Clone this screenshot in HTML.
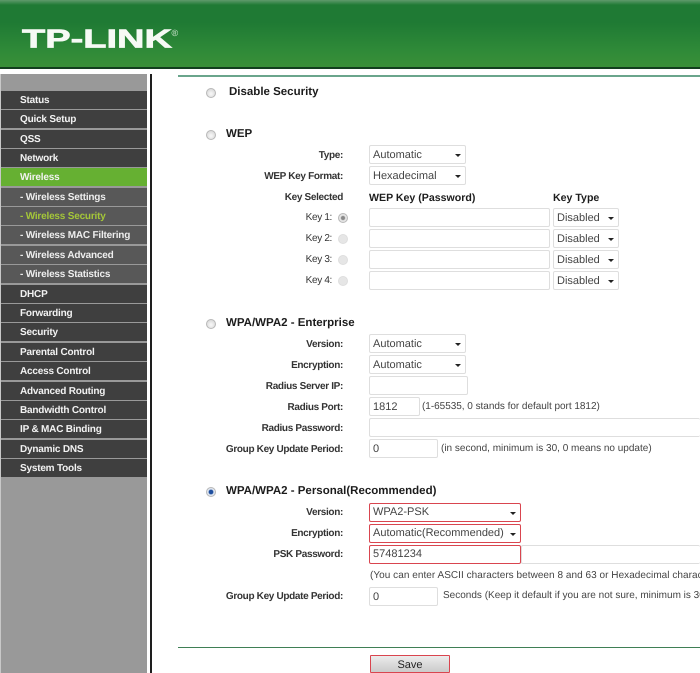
<!DOCTYPE html>
<html><head><meta charset="utf-8">
<style>
html,body{margin:0;padding:0;background:#fff;overflow:hidden}
body{position:relative;width:700px;height:673px;overflow:hidden;font-family:"Liberation Sans",Arial,sans-serif;color:#222;text-rendering:geometricPrecision;filter:blur(.25px)}
div,span{position:absolute;box-sizing:border-box;white-space:nowrap}
.m{left:1px;width:146px;height:18px;background:#3f3f3f;color:#f2f2f2;font-weight:bold;font-size:10px;letter-spacing:-.2px;line-height:20px;padding-left:19px}
.s{background:#585858;color:#eee}
.l{right:357px;font-weight:bold;font-size:10px;letter-spacing:-.33px;line-height:18px;color:#333;text-align:right}
.h{font-weight:bold;font-size:11.5px;line-height:18px;color:#1c1c1c}
.i{background:#fff;border:1px solid #dedede;border-radius:2px;font-size:11px;line-height:18px;padding-left:3px;color:#444;height:19px}
.sel::after{content:"";position:absolute;right:4px;top:8px;border:3px solid transparent;border-top:3.5px solid #222;border-bottom:0}
.r{border-color:#d9454f;border-width:1.5px;line-height:17px}
.t{font-size:10px;line-height:18px;color:#444}
.o{width:10px;height:10px;border-radius:50%;background:radial-gradient(circle at 50% 60%,#f4f4f4 15%,#cfcfcf 100%);border:1px solid #b8b8b8}
.d{width:10px;height:10px;border-radius:50%;background:#e6e6e6;border:1px solid #dedede}
</style></head><body>
<div style="left:0;top:0;width:700px;height:68px;background:linear-gradient(#5f9a6c 0,#1f7a34 5px,#1f7a34 22px,#2f8a38 50px,#3a9038 68px)"></div>
<div style="left:0;top:67px;width:700px;height:2px;background:#123f1e"></div>
<svg style="position:absolute;left:0;top:0" width="200" height="60"><text x="22" y="47.5" font-family="Liberation Sans" font-weight="bold" font-size="26" fill="#f6faf5" stroke="#f6faf5" stroke-width=".7" textLength="150" lengthAdjust="spacingAndGlyphs">TP-LINK</text><text x="171.5" y="36" font-family="Liberation Sans" font-size="9" fill="#d5e8d5">®</text></svg>

<div style="left:0;top:74px;width:1px;height:599px;background:#c8c8c8"></div>
<div style="left:1px;top:74px;width:146px;height:599px;background:#999"></div>
<div style="left:150px;top:74px;width:2px;height:599px;background:#1e1e1e"></div>
<div style="left:178px;top:75px;width:522px;height:2px;background:#6aa58c"></div>
<div style="left:178px;top:647px;width:522px;height:1px;background:#3f7f55"></div>

<div class="m" style="top:91px">Status</div>
<div class="m" style="top:110px">Quick Setup</div>
<div class="m" style="top:130px">QSS</div>
<div class="m" style="top:149px">Network</div>
<div class="m" style="top:168px;background:#66b032">Wireless</div>
<div class="m s" style="top:188px">- Wireless Settings</div>
<div class="m s" style="top:207px;color:#a4c639">- Wireless Security</div>
<div class="m s" style="top:226px">- Wireless MAC Filtering</div>
<div class="m s" style="top:246px">- Wireless Advanced</div>
<div class="m s" style="top:265px">- Wireless Statistics</div>
<div class="m" style="top:285px">DHCP</div>
<div class="m" style="top:304px">Forwarding</div>
<div class="m" style="top:323px">Security</div>
<div class="m" style="top:343px">Parental Control</div>
<div class="m" style="top:362px">Access Control</div>
<div class="m" style="top:382px">Advanced Routing</div>
<div class="m" style="top:401px">Bandwidth Control</div>
<div class="m" style="top:420px">IP &amp; MAC Binding</div>
<div class="m" style="top:440px">Dynamic DNS</div>
<div class="m" style="top:459px">System Tools</div>

<div class="o" style="left:206px;top:88px"></div>
<div class="h" style="left:229px;top:83px">Disable Security</div>

<div class="o" style="left:206px;top:130px"></div>
<div class="h" style="left:226px;top:125px">WEP</div>
<div class="l" style="top:147px">Type:</div>
<div class="i sel" style="left:369px;top:145px;width:97px">Automatic</div>
<div class="l" style="top:168px">WEP Key Format:</div>
<div class="i sel" style="left:369px;top:166px;width:97px">Hexadecimal</div>
<div class="l" style="top:189px">Key Selected</div>
<div class="h" style="left:369px;top:189px;font-size:10.6px">WEP Key (Password)</div>
<div class="h" style="left:553px;top:189px;font-size:10.6px">Key Type</div>
<div class="l" style="top:209px;right:368px;font-weight:normal">Key 1:</div>
<div class="o" style="left:338px;top:213px;background:radial-gradient(circle,#888 30%,#e4e4e4 45%)"></div>
<div class="i" style="left:369px;top:208px;width:181px"></div>
<div class="i sel" style="left:553px;top:208px;width:66px">Disabled</div>
<div class="l" style="top:230px;right:368px;font-weight:normal">Key 2:</div>
<div class="d" style="left:338px;top:234px"></div>
<div class="i" style="left:369px;top:229px;width:181px"></div>
<div class="i sel" style="left:553px;top:229px;width:66px">Disabled</div>
<div class="l" style="top:251px;right:368px;font-weight:normal">Key 3:</div>
<div class="d" style="left:338px;top:255px"></div>
<div class="i" style="left:369px;top:250px;width:181px"></div>
<div class="i sel" style="left:553px;top:250px;width:66px">Disabled</div>
<div class="l" style="top:272px;right:368px;font-weight:normal">Key 4:</div>
<div class="d" style="left:338px;top:276px"></div>
<div class="i" style="left:369px;top:271px;width:181px"></div>
<div class="i sel" style="left:553px;top:271px;width:66px">Disabled</div>

<div class="o" style="left:206px;top:319px"></div>
<div class="h" style="left:226px;top:314px">WPA/WPA2 - Enterprise</div>
<div class="l" style="top:336px">Version:</div>
<div class="i sel" style="left:369px;top:334px;width:97px">Automatic</div>
<div class="l" style="top:357px">Encryption:</div>
<div class="i sel" style="left:369px;top:355px;width:97px">Automatic</div>
<div class="l" style="top:378px">Radius Server IP:</div>
<div class="i" style="left:369px;top:376px;width:99px"></div>
<div class="l" style="top:399px">Radius Port:</div>
<div class="i" style="left:369px;top:397px;width:51px">1812</div>
<div class="t" style="left:422px;top:398px;letter-spacing:-.03px">(1-65535, 0 stands for default port 1812)</div>
<div class="l" style="top:420px">Radius Password:</div>
<div class="i" style="left:369px;top:418px;width:331px;border-right:0"></div>
<div class="l" style="top:441px">Group Key Update Period:</div>
<div class="i" style="left:369px;top:439px;width:69px">0</div>
<div class="t" style="left:441px;top:440px">(in second, minimum is 30, 0 means no update)</div>

<div class="o" style="left:206px;top:487px;background:radial-gradient(circle,#1f4f9f 35%,#dfe6f0 50%)"></div>
<div class="h" style="left:226px;top:482px">WPA/WPA2 - Personal(Recommended)</div>
<div class="l" style="top:504px">Version:</div>
<div class="i sel r" style="left:369px;top:503px;width:152px">WPA2-PSK</div>
<div class="l" style="top:525px">Encryption:</div>
<div class="i sel r" style="left:369px;top:524px;width:152px">Automatic(Recommended)</div>
<div class="l" style="top:546px">PSK Password:</div>
<div class="i" style="left:521px;top:545px;width:179px;border-right:0"></div>
<div class="i r" style="left:369px;top:545px;width:152px">57481234</div>
<div class="t" style="left:370px;top:567px;width:330px;overflow:hidden;letter-spacing:.04px">(You can enter ASCII characters between 8 and 63 or Hexadecimal characters between 8 and 64.)</div>
<div class="l" style="top:588px">Group Key Update Period:</div>
<div class="i" style="left:369px;top:587px;width:69px">0</div>
<div class="t" style="left:443px;top:587px;width:257px;overflow:hidden">Seconds (Keep it default if you are not sure, minimum is 30, 0 means no update)</div>

<div style="left:370px;top:655px;width:80px;height:18px;background:linear-gradient(#ececec,#cbcbcb);border:1.5px solid #d9454f;border-bottom:1px solid #d9454f;border-radius:1px;font-size:11px;line-height:19px;text-align:center;color:#222">Save</div>
</body></html>
